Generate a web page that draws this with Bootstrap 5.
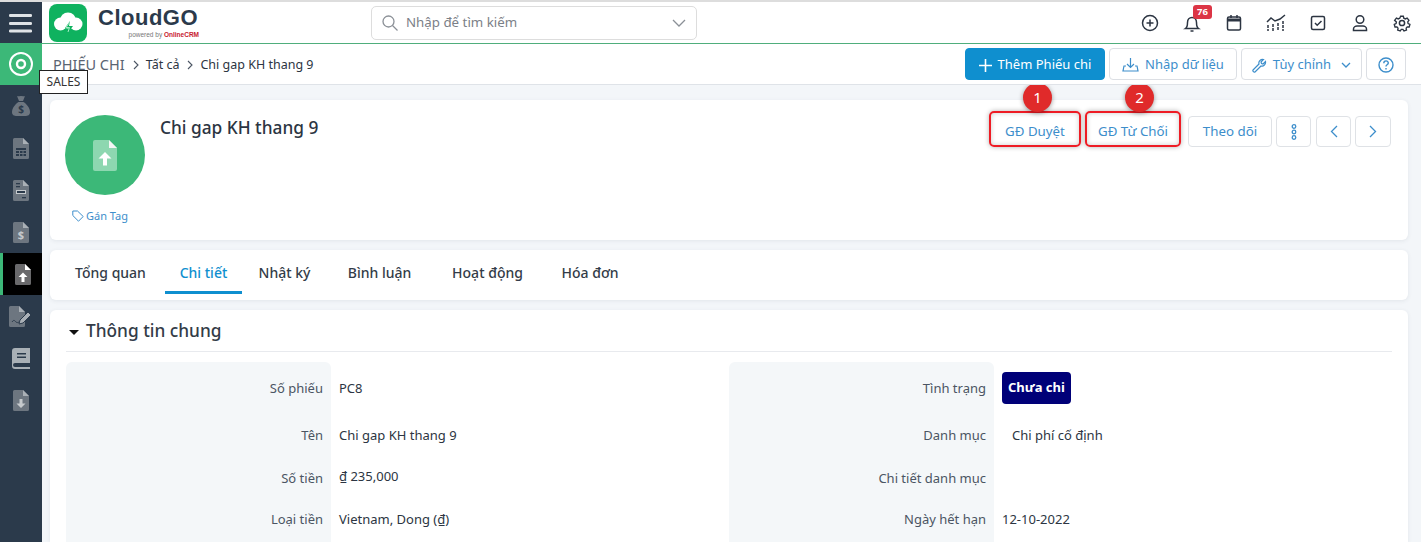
<!DOCTYPE html>
<html lang="vi">
<head>
<meta charset="utf-8">
<title>Phiếu chi</title>
<link href="https://cdn.jsdelivr.net/npm/bootstrap@5.3.0/dist/css/bootstrap.min.css" rel="stylesheet">
<style>
html,body{height:542px;overflow:hidden}
body{font-family:"Noto Sans",sans-serif;font-size:13px;color:#2c3542;background:#f3f6f9}
.shell{height:542px;overflow:hidden}
.flex-none{flex:none}
.side{width:42px;background:#2b3a4b;flex:none;position:relative}
.side-cell{height:42px;display:flex;align-items:center;justify-content:center;flex:none}
.side-top{height:43px;border-top:2px solid #ddd}
.side-green{background:#3cb878}
.side-active{background:#000;border-left:3px solid #3cb878}
.tip-sales{position:absolute;left:39px;top:70px;width:49px;height:24px;background:#fff;border:1px solid #222;font-size:12px;color:#333;display:flex;align-items:center;justify-content:center;z-index:5}
.main-col{min-width:0;height:542px}
.topbar{height:44px;flex:none;background:#fff;border-top:2px solid #ddd;border-bottom:1px solid #4fae7c;padding-left:7px;padding-right:9px}
.brand-tile{width:38px;height:38px;background:#0fb25f;border-radius:8px}
.brand-block{width:112px;padding-left:11px;flex:none}
.brand-name{font-family:"Liberation Sans",sans-serif;font-weight:700;font-size:22px;line-height:20px;color:#2b3a4b;letter-spacing:.5px;white-space:nowrap}
.brand-sub{font-family:"Liberation Sans",sans-serif;font-size:6.5px;line-height:7px;margin-top:3px;color:#777;text-align:right;white-space:nowrap}
.brand-sub b{color:#c8202f}
.searchbox{width:326px;height:34px;margin-left:172px;border:1px solid #ddd;border-radius:5px;padding:0 10px;color:#7b8087;font-size:13.3px}
.top-icons{gap:22px}
.bell-wrap{position:relative}
.bell-num{position:absolute;left:11px;top:-8px;background:#dc3545;color:#fff;font-size:9.5px;font-weight:700;line-height:14px;padding:0 4px;border-radius:3px}
.crumbbar{height:41px;flex:none;background:#fff;border-bottom:1px solid #dfe3e8;padding:0 15px 0 11px;font-size:12.5px}
.crumbbar>span{padding-top:2px}
.crumb-root{font-size:14.5px;color:#5a6472}
.crumb-sep{margin:0 6px 0 7px;display:inline-flex}
.bar-btn{height:32px;border:1px solid #dcdfe4;border-radius:4px;background:#fff;color:#3d8ecb;font-size:13px;padding:2px 0 0;display:inline-flex;align-items:center;justify-content:center;gap:6px;white-space:nowrap;flex:none}
.bar-btn-main{background:#0f8fcf;border-color:#0f8fcf;color:#fff}
.bar-w1{width:140px}.bar-w2{width:128px}.bar-w3{width:121px}.bar-w4{width:40px}
.bar-gap{gap:4px}
.work-area{padding:15px 13px 0 8px;min-height:0;overflow:hidden}
.panel{background:#fff;border-radius:6px;box-shadow:0 1px 4px rgba(60,70,90,.09)}
.panel-head{height:140px;padding:15px 17px 0 15px;margin-bottom:10px}
.avatar-disc{width:80px;height:80px;border-radius:50%;background:#3cb878}
.tag-link{font-size:11px;color:#3d8ecb;margin-top:13px;gap:2px;padding-left:7px}
.rec-title{font-size:17.3px;font-weight:500;color:#2c3542;line-height:24px;margin:1px 0 0 15px}
.head-btns{margin-top:1px;align-items:flex-start}
.act-btn{height:31px;border:1px solid #dfe2e6;border-radius:4px;background:#fff;color:#3d8ecb;font-size:13.3px;padding:0;display:inline-flex;align-items:center;justify-content:center;flex:none}
.act-hl{position:relative;border-color:transparent}
.act-hl::after{content:"";position:absolute;left:-5px;right:-5px;top:-6px;bottom:-1px;border:2px solid #ee1c25;border-radius:5px;box-shadow:0 0 5px rgba(0,0,0,.3),inset 0 0 5px rgba(0,0,0,.2)}
.num-pin{position:absolute;left:50%;top:-34px;width:29px;height:29px;margin-left:-12px;border-radius:50%;background:#e02a2a;color:#fff;font-size:15px;display:flex;align-items:center;justify-content:center;box-shadow:0 1px 5px rgba(0,0,0,.4);z-index:3}
.pin-two{margin-left:-8px}
.act-w1{width:84px;margin-right:12px}
.act-w2{width:88px;margin-right:11px}
.act-w3{width:84px;margin-right:4px}
.act-w4{width:35px;margin-right:5px}
.act-w5{width:35px;margin-right:4px}
.act-w6{width:36px}
.panel-tabs{height:50px;flex:none;margin-bottom:10px;padding-left:10px}
.tab-item{color:#333c48;font-size:14px;font-weight:500;height:44px;padding-top:3px;display:flex;align-items:center;justify-content:center;border-bottom:3px solid transparent;text-decoration:none}
.tab-on{color:#0f8fcf;border-bottom-color:#0f8fcf}
.tab1{width:105px;padding-right:4px}.tab2{width:77px}.tab3{width:85px}.tab4{width:105px}.tab5{width:111px}.tab6{width:94px}
.panel-info{padding:0 16px;height:232px;overflow:hidden;border-bottom-left-radius:0;border-bottom-right-radius:0}
.sec-head{height:42px;border-bottom:1px solid #e8eaee;font-size:17.3px;font-weight:500;color:#333c48;gap:7px;padding-left:3px}
.caret-down{width:0;height:0;border-left:5px solid transparent;border-right:5px solid transparent;border-top:5px solid #111;margin-top:3px}
.info-grid{margin-top:10px}
.info-half{width:663px;display:flex;flex-direction:column}
.f-row{display:flex;font-size:13px}
.f-label{width:265px;background:#f4f7f9;padding-right:8px;text-align:right;color:#4b5563;flex:none;display:flex;justify-content:flex-end}
.f-val{padding-left:8px;color:#2c3542;display:flex}
.rad-top{border-top-left-radius:6px;border-top-right-radius:6px}
.h-a{height:59px;padding-top:17px}
.h-b{height:42px;padding-top:5px}
.h-c{height:41px;padding-top:6px}
.h-d{height:38px;padding-top:6px}
.state-pill{background:#000078;color:#fff;font-weight:700;font-size:13px;border-radius:4px;padding:0 6px;height:32px;display:inline-flex;align-items:center;margin-top:-7px}
.indent-val{padding-left:18px}
.up-3{padding-top:4px}
</style>
</head>
<body>
<div class="shell d-flex">
  <aside class="side d-flex flex-column">
    <div class="side-cell side-top">
      <svg width="24" height="20" viewBox="0 0 24 20"><g fill="#dfe3e6"><rect y="1" width="23" height="3" rx="1.2"/><rect y="9" width="23" height="3" rx="1.2"/><rect y="16.5" width="23" height="3" rx="1.2"/></g></svg>
    </div>
    <div class="side-cell side-green">
      <svg width="26" height="26" viewBox="0 0 26 26" fill="none" stroke="#fff"><circle cx="13" cy="13" r="11" stroke-width="2"/><circle cx="13" cy="13" r="4" stroke-width="2.4"/></svg>
    </div>
    <div class="side-cell">
      <svg width="22" height="22" viewBox="0 0 22 22"><path d="M7 1c2 1 3-.5 4 .2 1-.7 3 .6 4-.2l-2 5H9zM8.500 7h5c3 2 6.500 6 6.500 10 0 3-2 4-5 4H7c-3 0-5-1-5-4 0-4 3.500-8 6.500-10z" fill="#6d7680"/><text x="11" y="17.500" font-size="10" font-weight="700" text-anchor="middle" fill="#2b3a4b">$</text></svg>
    </div>
    <div class="side-cell">
      <svg width="16" height="21" viewBox="0 0 16 21"><path d="M1.500 0H10l6 6v13.500a1.500 1.500 0 0 1-1.500 1.500h-13A1.500 1.500 0 0 1 0 19.500v-18A1.500 1.500 0 0 1 1.500 0z" fill="#6d7680"/><path d="M10 0l6 6h-6z" fill="#aab0b6"/><g fill="#2b3a4b"><rect x="3" y="10" width="10" height="2"/><rect x="3" y="13" width="3" height="2"/><rect x="7" y="13" width="2.500" height="2"/><rect x="10.500" y="13" width="2.500" height="2"/><rect x="3" y="16" width="3" height="2"/><rect x="7" y="16" width="2.500" height="2"/><rect x="10.500" y="16" width="2.500" height="2"/></g></svg>
    </div>
    <div class="side-cell">
      <svg width="16" height="21" viewBox="0 0 16 21"><path d="M1.500 0H10l6 6v13.500a1.500 1.500 0 0 1-1.500 1.500h-13A1.500 1.500 0 0 1 0 19.500v-18A1.500 1.500 0 0 1 1.500 0z" fill="#6d7680"/><path d="M10 0l6 6h-6z" fill="#aab0b6"/><g fill="#2b3a4b"><rect x="3" y="3" width="4" height="1.300"/><rect x="3" y="6" width="4" height="1.300"/><rect x="9" y="17" width="4" height="1.300"/></g><rect x="3" y="10" width="10" height="4" fill="#c6cacd"/><rect x="4" y="11" width="8" height="2" fill="#2b3a4b"/></svg>
    </div>
    <div class="side-cell">
      <svg width="16" height="21" viewBox="0 0 16 21"><path d="M1.500 0H10l6 6v13.500a1.500 1.500 0 0 1-1.500 1.500h-13A1.500 1.500 0 0 1 0 19.500v-18A1.500 1.500 0 0 1 1.500 0z" fill="#6d7680"/><path d="M10 0l6 6h-6z" fill="#aab0b6"/><text x="8" y="17" font-size="11" font-weight="700" text-anchor="middle" fill="#c6cacd">$</text></svg>
    </div>
    <div class="side-cell side-active">
      <svg width="16" height="21" viewBox="0 0 16 21"><path d="M1.500 0H10l6 6v13.500a1.500 1.500 0 0 1-1.500 1.500h-13A1.500 1.500 0 0 1 0 19.500v-18A1.500 1.500 0 0 1 1.500 0z" fill="#69696b"/><path d="M10 0l6 6h-6z" fill="#fff"/><path d="M8 8.500l4.500 4.500H9.500v5h-3v-5H3.500z" fill="#fff"/></svg>
    </div>
    <div class="side-cell">
      <svg width="24" height="21" viewBox="0 0 24 21"><path d="M1.500 0H10l6 6v13.500a1.500 1.500 0 0 1-1.500 1.500h-13A1.500 1.500 0 0 1 0 19.500v-18A1.500 1.500 0 0 1 1.500 0z" fill="#6d7680"/><path d="M10 0l6 6h-6z" fill="#aab0b6"/><path d="M3 16c2-3 3-1 4 0s2 .5 3 0" stroke="#2b3a4b" fill="none"/><path d="M11 14l8-8 3 3-8 8-4 1z" fill="#aab0b6" stroke="#2b3a4b"/></svg>
    </div>
    <div class="side-cell">
      <svg width="18" height="21" viewBox="0 0 18 21"><path d="M3 0h15v15H3a2 2 0 0 0 0 4h15v2H3a3 3 0 0 1-3-3V3a3 3 0 0 1 3-3z" fill="#a9b0b6"/><rect x="5" y="5" width="9" height="1.500" fill="#2b3a4b"/><rect x="5" y="8.500" width="9" height="1.500" fill="#2b3a4b"/></svg>
    </div>
    <div class="side-cell">
      <svg width="16" height="21" viewBox="0 0 16 21"><path d="M1.500 0H10l6 6v13.500a1.500 1.500 0 0 1-1.500 1.500h-13A1.500 1.500 0 0 1 0 19.500v-18A1.500 1.500 0 0 1 1.500 0z" fill="#6d7680"/><path d="M10 0l6 6h-6z" fill="#aab0b6"/><path d="M8 18l-4.500-4.500h3V9h3v4.500h3z" fill="#c6cacd"/></svg>
    </div>
    <div class="tip-sales">SALES</div>
  </aside>
  <div class="main-col flex-grow-1 d-flex flex-column">
    <header class="topbar d-flex align-items-center">
      <div class="brand-tile d-flex align-items-center justify-content-center flex-none">
        <svg width="30" height="22" viewBox="0 0 30 22"><g fill="#fff"><circle cx="7.500" cy="12" r="6.500"/><circle cx="15" cy="8.500" r="8"/><circle cx="23" cy="12" r="6.500"/></g><path d="M17 9l-5 7h4l-2 6 6-8h-4z" fill="#0fb25f"/><path d="M16.500 10.500l-3.500 5h3.500l-1.500 4.500" fill="none" stroke="#a6ebc6"/></svg>
      </div>
      <div class="brand-block">
        <div class="brand-name">CloudGO</div>
        <div class="brand-sub">powered by <b>OnlineCRM</b></div>
      </div>
      <div class="searchbox d-flex align-items-center gap-2">
        <svg width="16" height="16" viewBox="0 0 16 16" fill="none" stroke="#8b9097" stroke-width="1.300"><circle cx="6.500" cy="6.500" r="5.500"/><path d="M10.500 10.500l5 5"/></svg>
        <span class="flex-grow-1">Nhập để tìm kiếm</span>
        <svg width="14" height="8" viewBox="0 0 14 8" fill="none" stroke="#8b9097" stroke-width="1.300"><path d="M1 1l6 6 6-6"/></svg>
      </div>
      <div class="top-icons d-flex align-items-center ms-auto">
        <svg width="20" height="20" viewBox="0 0 20 20" fill="none" stroke="#2c3542" stroke-width="1.500"><circle cx="10" cy="10" r="7.500"/><path d="M10 6.500v7M6.500 10h7"/></svg>
        <span class="bell-wrap d-inline-flex">
          <svg width="20" height="20" viewBox="0 0 20 20" fill="none" stroke="#2c3542" stroke-width="1.500"><path d="M3.500 15.500c1.500-1 2-3 2-6 0-3 2-5 4.500-5s4.500 2 4.500 5c0 3 .5 5 2 6z"/><path d="M8.500 18h3"/></svg>
          <span class="bell-num">76</span>
        </span>
        <svg width="20" height="20" viewBox="0 0 20 20" fill="none" stroke="#2c3542" stroke-width="1.500"><rect x="3.500" y="4" width="13" height="13" rx="1.500"/><path d="M3.500 7h13" stroke-width="3"/><path d="M7 2v3M13 2v3"/></svg>
        <svg width="20" height="20" viewBox="0 0 20 20" fill="none" stroke="#2c3542" stroke-width="1.500"><path d="M1 9l4-4 4 3 5-2 5-4"/><path d="M2 12v6M7 11v7M12 10v8M17 8v10" stroke-dasharray="3 1"/></svg>
        <svg width="20" height="20" viewBox="0 0 20 20" fill="none" stroke="#2c3542" stroke-width="1.500"><rect x="3.500" y="3.500" width="13" height="13" rx="1.500"/><path d="M7 10l2.200 2.200L13.500 8"/></svg>
        <svg width="20" height="20" viewBox="0 0 20 20" fill="none" stroke="#2c3542" stroke-width="1.500"><circle cx="10" cy="6.500" r="3.800"/><path d="M3.500 17.500v-1.500c0-2 2-3 3.500-3h6c1.500 0 3.500 1 3.500 3v1.500z"/></svg>
        <svg width="20" height="20" viewBox="0 0 20 20" fill="none" stroke="#2c3542" stroke-width="1.500"><circle cx="10" cy="10" r="2.600"/><path d="M8.500 2.500h3l.5 2.200 1.700.8 2-1 2 2.500-1.300 1.800.4 1.800 2 1-.8 2.800-2.200-.1-1.200 1.400.4 2.200-2.800 1-1.200-1.800h-1.800l-1.200 1.800-2.800-1 .4-2.200-1.200-1.400-2.200.1-.8-2.800 2-1 .4-1.800L1.800 7l2-2.500 2 1 1.700-.8z" transform="translate(1 1) scale(.9)"/></svg>
      </div>
    </header>
    <div class="crumbbar d-flex align-items-center">
      <span class="crumb-root">PHIẾU CHI</span>
      <span class="crumb-sep"><svg width="8" height="10" viewBox="0 0 8 10" fill="none" stroke="#4b5563" stroke-width="1.100"><path d="M2 1l4 4-4 4"/></svg></span>
      <span>Tất cả</span>
      <span class="crumb-sep"><svg width="8" height="10" viewBox="0 0 8 10" fill="none" stroke="#4b5563" stroke-width="1.100"><path d="M2 1l4 4-4 4"/></svg></span>
      <span>Chi gap KH thang 9</span>
      <div class="d-flex ms-auto bar-gap">
        <button class="bar-btn bar-btn-main bar-w1"><svg width="13" height="13" viewBox="0 0 13 13" stroke="#fff" stroke-width="1.600"><path d="M6.500 0v13M0 6.500h13"/></svg>Thêm Phiếu chi</button>
        <button class="bar-btn bar-w2"><svg width="17" height="16" viewBox="0 0 17 16" fill="none" stroke="#3d8ecb" stroke-width="1.200"><path d="M8.500 1v9M5 7l3.500 3.500L12 7"/><path d="M4 9H2l-1 5h15l-1-5h-2"/></svg>Nhập dữ liệu</button>
        <button class="bar-btn bar-w3"><svg width="15" height="15" viewBox="0 0 15 15" fill="none" stroke="#3d8ecb" stroke-width="1.200"><path d="M1 12l6-6c-.8-2.500 1.500-5 4.500-4.500L9 4l.5 1.500L11 6l2.500-2.500c.5 3-2 5.300-4.500 4.500l-6 6c-1 .7-2.700-1-2-2z"/></svg>Tùy chỉnh<svg width="10" height="6" viewBox="0 0 10 6" fill="none" stroke="#3d8ecb" stroke-width="1.300" class="ms-1"><path d="M1 1l4 4 4-4"/></svg></button>
        <button class="bar-btn bar-w4"><svg width="16" height="16" viewBox="0 0 16 16" fill="none" stroke="#3d8ecb" stroke-width="1.400"><circle cx="8" cy="8" r="7"/><path d="M5.800 6.200c0-3 4.500-3 4.500-.2 0 1.800-2.300 1.800-2.300 3.500"/><path d="M8 11v1.500"/></svg></button>
      </div>
    </div>
    <div class="work-area flex-grow-1">
      <section class="panel panel-head d-flex">
        <div class="d-flex flex-column flex-none">
          <div class="avatar-disc d-flex align-items-center justify-content-center">
            <svg width="24" height="31" viewBox="0 0 24 31"><path d="M2 0h14l8 8v21a2 2 0 0 1-2 2H2a2 2 0 0 1-2-2V2a2 2 0 0 1 2-2z" fill="#8dd7b0"/><path d="M16 0l8 8h-8z" fill="#f3f6f4"/><path d="M12 12l6.500 6.500H14v7h-4v-7H5.500z" fill="#fff"/></svg>
          </div>
          <div class="tag-link d-flex align-items-center">
            <svg width="12" height="12" viewBox="0 0 12 12" fill="none" stroke="#3d8ecb"><path d="M.8 1h4.700l5.700 5.500-4.700 4.700L.8 5.500z"/></svg>Gán Tag
          </div>
        </div>
        <h1 class="rec-title">Chi gap KH thang 9</h1>
        <div class="head-btns d-flex ms-auto">
          <div class="act-btn act-hl act-w1">GĐ Duyệt<span class="num-pin">1</span></div>
          <div class="act-btn act-hl act-w2">GĐ Từ Chối<span class="num-pin pin-two">2</span></div>
          <div class="act-btn act-w3">Theo dõi</div>
          <div class="act-btn act-w4"><svg width="6" height="16" viewBox="0 0 6 16" fill="none" stroke="#3d8ecb" stroke-width="1.300"><circle cx="3" cy="2.500" r="1.800"/><circle cx="3" cy="8" r="1.800"/><circle cx="3" cy="13.500" r="1.800"/></svg></div>
          <div class="act-btn act-w5"><svg width="8" height="13" viewBox="0 0 8 13" fill="none" stroke="#3d8ecb" stroke-width="1.300"><path d="M7 1L1.500 6.500 7 12"/></svg></div>
          <div class="act-btn act-w6"><svg width="8" height="13" viewBox="0 0 8 13" fill="none" stroke="#3d8ecb" stroke-width="1.300"><path d="M1 1l5.500 5.500L1 12"/></svg></div>
        </div>
      </section>
      <nav class="panel panel-tabs d-flex align-items-start">
        <a class="tab-item tab1" href="#">Tổng quan</a>
        <a class="tab-item tab-on tab2" href="#">Chi tiết</a>
        <a class="tab-item tab3" href="#">Nhật ký</a>
        <a class="tab-item tab4" href="#">Bình luận</a>
        <a class="tab-item tab5" href="#">Hoạt động</a>
        <a class="tab-item tab6" href="#">Hóa đơn</a>
      </nav>
      <section class="panel panel-info">
        <div class="sec-head d-flex align-items-center"><span class="caret-down"></span>Thông tin chung</div>
        <div class="info-grid d-flex">
          <div class="info-half">
            <div class="f-row"><div class="f-label rad-top h-a">Số phiếu</div><div class="f-val h-a">PC8</div></div>
            <div class="f-row"><div class="f-label h-b">Tên</div><div class="f-val h-b">Chi gap KH thang 9</div></div>
            <div class="f-row"><div class="f-label h-c">Số tiền</div><div class="f-val h-c up-3">₫ 235,000</div></div>
            <div class="f-row"><div class="f-label h-d">Loại tiền</div><div class="f-val h-d">Vietnam, Dong (₫)</div></div>
          </div>
          <div class="info-half">
            <div class="f-row"><div class="f-label rad-top h-a">Tình trạng</div><div class="f-val h-a"><span class="state-pill">Chưa chi</span></div></div>
            <div class="f-row"><div class="f-label h-b">Danh mục</div><div class="f-val h-b indent-val">Chi phí cố định</div></div>
            <div class="f-row"><div class="f-label h-c">Chi tiết danh mục</div><div class="f-val h-c"></div></div>
            <div class="f-row"><div class="f-label h-d">Ngày hết hạn</div><div class="f-val h-d">12-10-2022</div></div>
          </div>
        </div>
      </section>
    </div>
  </div>
</div>
</body>
</html>
